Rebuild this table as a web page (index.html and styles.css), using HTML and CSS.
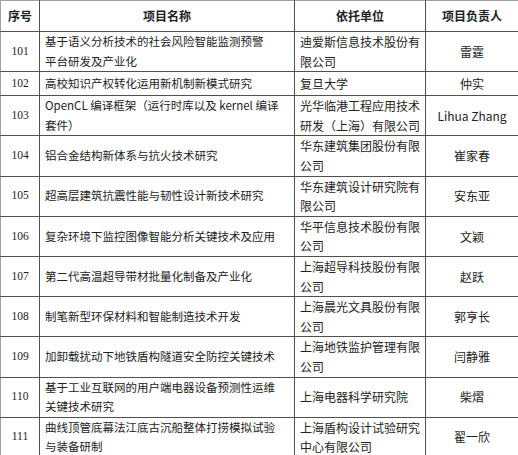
FILE: index.html
```html
<!DOCTYPE html>
<html lang="zh-CN">
<head>
<meta charset="utf-8">
<title>项目列表</title>
<link rel="stylesheet" href="styles.css">
</head>
<body>
<table class="grid">
  <colgroup>
    <col class="c-no">
    <col class="c-name">
    <col class="c-unit">
    <col class="c-lead">
  </colgroup>
  <thead>
    <tr>
      <th>序号</th>
      <th>项目名称</th>
      <th>依托单位</th>
      <th>项目负责人</th>
    </tr>
  </thead>
  <tbody>
    <tr>
      <td class="no">101</td>
      <td class="name">基于语义分析技术的社会风险智能监测预警<br>平台研发及产业化</td>
      <td class="unit">迪爱斯信息技术股份有<br>限公司</td>
      <td class="lead">雷霆</td>
    </tr>
    <tr class="short">
      <td class="no">102</td>
      <td class="name">高校知识产权转化运用新机制新模式研究</td>
      <td class="unit">复旦大学</td>
      <td class="lead">仲实</td>
    </tr>
    <tr>
      <td class="no">103</td>
      <td class="name">OpenCL 编译框架（运行时库以及 kernel 编译<br>套件）</td>
      <td class="unit">光华临港工程应用技术<br>研发（上海）有限公司</td>
      <td class="lead latin">Lihua Zhang</td>
    </tr>
    <tr>
      <td class="no">104</td>
      <td class="name">铝合金结构新体系与抗火技术研究</td>
      <td class="unit">华东建筑集团股份有限<br>公司</td>
      <td class="lead">崔家春</td>
    </tr>
    <tr>
      <td class="no">105</td>
      <td class="name">超高层建筑抗震性能与韧性设计新技术研究</td>
      <td class="unit">华东建筑设计研究院有<br>限公司</td>
      <td class="lead">安东亚</td>
    </tr>
    <tr>
      <td class="no">106</td>
      <td class="name">复杂环境下监控图像智能分析关键技术及应用</td>
      <td class="unit">华平信息技术股份有限<br>公司</td>
      <td class="lead">文颖</td>
    </tr>
    <tr>
      <td class="no">107</td>
      <td class="name">第二代高温超导带材批量化制备及产业化</td>
      <td class="unit">上海超导科技股份有限<br>公司</td>
      <td class="lead">赵跃</td>
    </tr>
    <tr>
      <td class="no">108</td>
      <td class="name">制笔新型环保材料和智能制造技术开发</td>
      <td class="unit">上海晨光文具股份有限<br>公司</td>
      <td class="lead">郭亨长</td>
    </tr>
    <tr>
      <td class="no">109</td>
      <td class="name">加卸载扰动下地铁盾构隧道安全防控关键技术</td>
      <td class="unit">上海地铁监护管理有限<br>公司</td>
      <td class="lead">闫静雅</td>
    </tr>
    <tr>
      <td class="no">110</td>
      <td class="name">基于工业互联网的用户端电器设备预测性运维<br>关键技术研究</td>
      <td class="unit">上海电器科学研究院</td>
      <td class="lead">柴熠</td>
    </tr>
    <tr class="last">
      <td class="no">111</td>
      <td class="name">曲线顶管底幕法江底古沉船整体打捞模拟试验<br>与装备研制</td>
      <td class="unit">上海盾构设计试验研究<br>中心有限公司</td>
      <td class="lead">翟一欣</td>
    </tr>
  </tbody>
</table>
</body>
</html>
```

FILE: styles.css
```css
html, body {
  margin: 0;
  padding: 0;
  background: #ffffff;
}

.grid {
  border-collapse: collapse;
  table-layout: fixed;
  width: 518px;
  font-family: "Noto Sans CJK SC", "Noto Sans", sans-serif;
  color: #222222;
}

.c-no { width: 39px; }
.c-name { width: 255px; }
.c-unit { width: 131px; }
.c-lead { width: 93px; }

.grid th,
.grid td {
  border: 1px solid #505050;
  vertical-align: middle;
}

.grid th {
  height: 30px;
  padding: 0;
  font-size: 12px;
  font-weight: 700;
  text-align: center;
  line-height: 16px;
}

.grid td {
  height: 23px;
  padding: 0 5px;
  font-size: 12px;
  line-height: 19.6px;
}

/* lighter outer frame */
.grid thead th { border-top-color: #a0a0a0; }
.grid th:first-child,
.grid td:first-child { border-left-color: #a0a0a0; }
.grid th:last-child,
.grid td:last-child { border-right-color: #a0a0a0; }
.grid tr.last td { border-bottom-color: #a0a0a0; }

.grid td.no {
  padding: 0;
  text-align: center;
  font-family: "Liberation Serif", "DejaVu Serif", serif;
  font-size: 11.5px;
}

.grid td.name {
  font-size: 11.5px;
  padding-left: 5px;
  padding-right: 2px;
}

.grid td.unit {
  padding-left: 5px;
  padding-right: 2px;
  white-space: nowrap;
}

.grid td.lead {
  text-align: center;
  padding: 0 2px;
}

.grid td.latin {
  font-size: 12px;
}
```
